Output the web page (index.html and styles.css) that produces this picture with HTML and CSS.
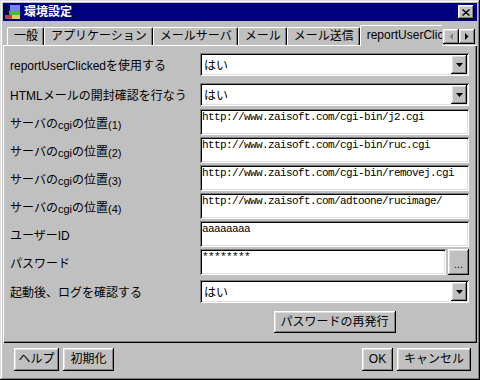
FILE: index.html
```html
<!DOCTYPE html>
<html lang="ja">
<head>
    <meta charset="UTF-8">
    <title>環境設定</title>
    <link rel="stylesheet" href="styles.css">
</head>
<body>
    <div class="window">
        <div class="titlebar">
            <svg class="app-icon" viewBox="0 0 16 16" width="16" height="16">
                <rect x="6" y="1" width="10" height="7" fill="#7f7fff"/>
                <rect x="5" y="7" width="11" height="5" fill="#3fbf3f"/>
                <rect x="1" y="11" width="7" height="4" fill="#c03f3f"/>
                <rect x="8" y="11" width="8" height="4" fill="#dfcf5f"/>
                <path d="M1.5 1v4h3M2.5 6v4h3M3 2.5h2" stroke="#000" fill="none"/>
            </svg>
            <span class="title">環境設定</span>
            <div class="close-btn raised">
                <svg viewBox="0 0 8 7" width="8" height="7"><path d="M0.5 0.5l7 6M7.5 0.5l-7 6" stroke="#000" stroke-width="1.4"/></svg>
            </div>
        </div>

        <div class="tabbar">
            <div class="tab-track">
                <div class="tab">一般</div>
                <div class="tab">アプリケーション</div>
                <div class="tab">メールサーバ</div>
                <div class="tab">メール</div>
                <div class="tab">メール送信</div>
                <div class="tab active">reportUserClic</div>
            </div>
            <div class="tab-scroll">
                <div class="scroll-btn raised">
                    <svg viewBox="0 0 4 7" width="4" height="7"><path d="M4 0v7L0.5 3.5z" fill="#808080"/></svg>
                </div>
                <div class="scroll-btn raised">
                    <svg viewBox="0 0 4 7" width="4" height="7"><path d="M0 0v7l3.5-3.5z" fill="#000"/></svg>
                </div>
            </div>
        </div>

        <div class="panel">
            <div class="row select-row">
                <label>reportUserClickedを使用する</label>
                <div class="combo sunken"><span class="combo-value">はい</span><span class="drop-btn raised"><svg viewBox="0 0 7 4" width="7" height="4"><path d="M0 0h7L3.5 4z"/></svg></span></div>
            </div>
            <div class="row select-row gap-big">
                <label>HTMLメールの開封確認を行なう</label>
                <div class="combo sunken"><span class="combo-value">はい</span><span class="drop-btn raised"><svg viewBox="0 0 7 4" width="7" height="4"><path d="M0 0h7L3.5 4z"/></svg></span></div>
            </div>
            <div class="row text-row gap-small">
                <label>サーバの<span class="small">cgi</span>の位置<span class="small">(1)</span></label>
                <div class="field sunken">http://www.zaisoft.com/cgi-bin/j2.cgi</div>
            </div>
            <div class="row text-row">
                <label>サーバの<span class="small">cgi</span>の位置<span class="small">(2)</span></label>
                <div class="field sunken">http://www.zaisoft.com/cgi-bin/ruc.cgi</div>
            </div>
            <div class="row text-row">
                <label>サーバの<span class="small">cgi</span>の位置<span class="small">(3)</span></label>
                <div class="field sunken">http://www.zaisoft.com/cgi-bin/removej.cgi</div>
            </div>
            <div class="row text-row">
                <label>サーバの<span class="small">cgi</span>の位置<span class="small">(4)</span></label>
                <div class="field sunken">http://www.zaisoft.com/adtoone/rucimage/</div>
            </div>
            <div class="row text-row">
                <label>ユーザーID</label>
                <div class="field sunken">aaaaaaaa</div>
            </div>
            <div class="row text-row">
                <label>パスワード</label>
                <div class="field sunken">********</div>
                <div class="dots-btn raised">...</div>
            </div>
            <div class="row select-row gap-mid">
                <label>起動後、ログを確認する</label>
                <div class="combo sunken"><span class="combo-value">はい</span><span class="drop-btn raised"><svg viewBox="0 0 7 4" width="7" height="4"><path d="M0 0h7L3.5 4z"/></svg></span></div>
            </div>
            <div class="reissue-row">
                <div class="btn raised btn-reissue">パスワードの再発行</div>
            </div>
        </div>

        <div class="footer">
            <div class="btn raised btn-help">ヘルプ</div>
            <div class="btn raised btn-init">初期化</div>
            <div class="spacer"></div>
            <div class="btn raised btn-ok">OK</div>
            <div class="btn raised btn-cancel">キャンセル</div>
        </div>
    </div>
</body>
</html>
```

FILE: styles.css
```css
* {
    box-sizing: border-box;
}
body {
    margin: 0;
    background: #c0c0c0;
    font-family: "Liberation Sans", "Noto Sans CJK JP", sans-serif;
    font-size: 12px;
    color: #000;
}
.window {
    width: 480px;
    height: 380px;
    padding: 3px;
    background: #c0c0c0;
    box-shadow: inset -1px -1px #000, inset 1px 1px #dfdfdf, inset -2px -2px #808080, inset 2px 2px #fff;
    display: flex;
    flex-direction: column;
}
.raised {
    background: #c0c0c0;
    box-shadow: inset -1px -1px #000, inset 1px 1px #fff, inset -2px -2px #808080, inset 2px 2px #dfdfdf;
}
.sunken {
    background: #fff;
    box-shadow: inset 1px 1px #808080, inset -1px -1px #fff, inset 2px 2px #000, inset -2px -2px #dfdfdf;
}

/* title bar */
.titlebar {
    height: 18px;
    background: #000080;
    color: #fff;
    display: flex;
    align-items: center;
    padding: 0 3px 0 1px;
}
.app-icon {
    margin-right: 4px;
}
.title {
    flex: 1;
    font-weight: bold;
    font-size: 12px;
    line-height: 18px;
}
.close-btn {
    width: 16px;
    height: 14px;
    display: flex;
    align-items: center;
    justify-content: center;
}

/* tabs */
.tabbar {
    height: 25px;
    display: flex;
    padding: 0 2px;
    position: relative;
    z-index: 1;
}
.tab-track {
    flex: 1;
    display: flex;
    align-items: flex-end;
    overflow: hidden;
    padding-left: 2px;
}
.tab {
    height: 18px;
    margin-bottom: 1px;
    padding: 0 5px 0 6px;
    border-top: 1px solid #fff;
    border-left: 1px solid #fff;
    border-right: 1px solid #000;
    border-radius: 2px 2px 0 0;
    box-shadow: inset -1px 0 #808080;
    line-height: 16px;
    white-space: nowrap;
}
.tab.active {
    height: 21px;
    margin: 0;
    padding: 0 2px 0 6px;
    border-right: 0;
    box-shadow: none;
    background: #c0c0c0;
    line-height: 19px;
}
.tab-scroll {
    display: flex;
    align-self: flex-end;
    margin: 0 0 2px 1px;
}
.scroll-btn {
    width: 16px;
    height: 15px;
    display: flex;
    align-items: center;
    justify-content: center;
}

/* panel */
.panel {
    margin-top: -1px;
    height: 298px;
    padding: 8px 8px 0 7px;
    box-shadow: inset 1px 1px #fff, inset -1px -1px #000, inset -2px -2px #808080;
    display: flex;
    flex-direction: column;
    gap: 2px;
}
.row {
    display: flex;
    align-items: center;
}
.row label {
    width: 190px;
    flex-shrink: 0;
    white-space: nowrap;
}
.row .small {
    font-size: 11px;
    position: relative;
    top: 1px;
}
.select-row {
    height: 23px;
}
.text-row {
    height: 26px;
}
.gap-big {
    margin-top: 5px;
}
.gap-small {
    margin-top: 1px;
}
.gap-mid {
    margin-top: 3px;
}
.combo {
    flex: 1;
    height: 100%;
    display: flex;
    padding: 2px;
}
.combo-value {
    flex: 1;
    padding-left: 2px;
    line-height: 19px;
    font-family: "Noto Sans CJK JP", sans-serif;
}
.drop-btn {
    width: 16px;
    display: flex;
    align-items: center;
    justify-content: center;
}
.field {
    flex: 1;
    height: 100%;
    padding: 2px 2px 0 2px;
    font-family: "Liberation Mono", monospace;
    font-size: 11px;
    letter-spacing: -0.6px;
    line-height: 13px;
    white-space: nowrap;
    overflow: hidden;
}
.dots-btn {
    width: 21px;
    height: 100%;
    margin-left: 2px;
    text-align: center;
    line-height: 30px;
    font-size: 11px;
}
.reissue-row {
    margin-top: 6px;
    padding-left: 190px;
    display: flex;
    justify-content: center;
}

/* buttons */
.btn {
    height: 23px;
    line-height: 23px;
    text-align: center;
    white-space: nowrap;
}
.btn-reissue {
    width: 122px;
    height: 22px;
    line-height: 22px;
}
.btn-help {
    width: 45px;
}
.btn-init {
    width: 51px;
}
.btn-ok {
    width: 31px;
}
.btn-cancel {
    width: 74px;
}

/* footer */
.footer {
    display: flex;
    gap: 4px;
    padding: 5px 6px 0 11px;
}
.spacer {
    flex: 1;
}
```
